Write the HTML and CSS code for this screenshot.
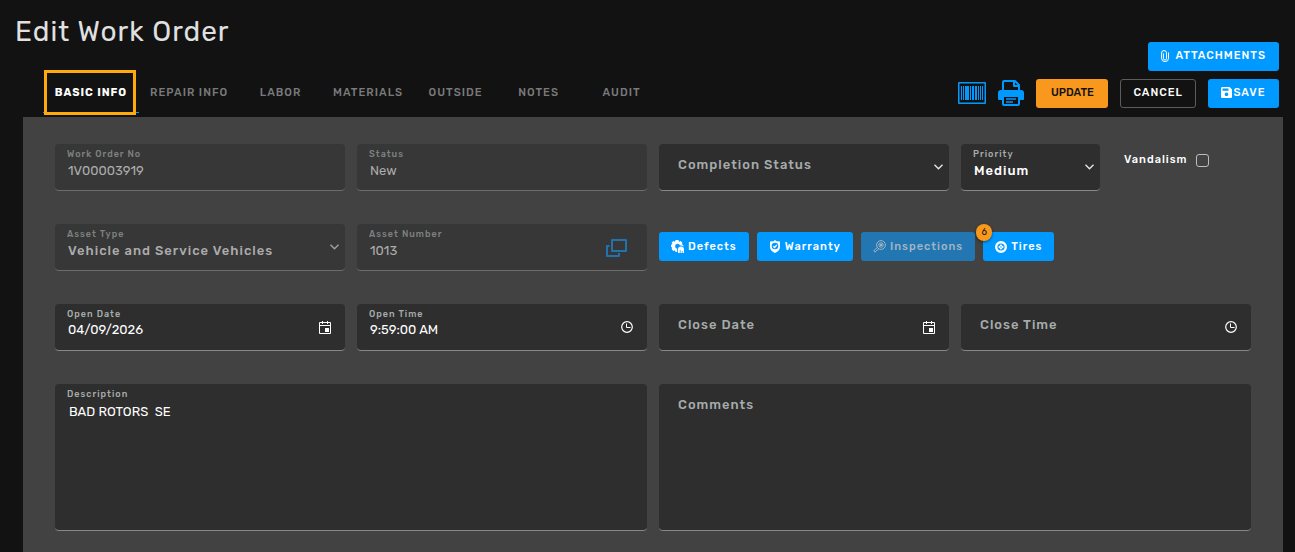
FILE: index.html
```
<!DOCTYPE html>
<html lang="en">
<head>
    <meta charset="UTF-8">
    <meta name="viewport" content="width=device-width, initial-scale=1.0">
    <title>Edit Work Order</title>
    <link rel="stylesheet" href="styles.css">
</head>
<body>
    <header class="page-header">
        <h1>Edit Work Order</h1>
        <button type="button" class="btn btn-primary btn-attach">
            <svg width="8" height="12" viewBox="0 0 8 12" fill="none" stroke="currentColor"><path d="M2.500 3.500v5a1.500 1.500 0 0 0 3 0V3a2.400 2.400 0 0 0-4.900 0v5.200a3.400 3.400 0 0 0 6.900 0V2.500"/></svg>
            ATTACHMENTS
        </button>
    </header>

    <div class="toolbar">
        <nav class="tabs">
            <a href="#basic" class="tab active">BASIC INFO</a>
            <a href="#repair" class="tab">REPAIR INFO</a>
            <a href="#labor" class="tab">LABOR</a>
            <a href="#materials" class="tab">MATERIALS</a>
            <a href="#outside" class="tab">OUTSIDE</a>
            <a href="#notes" class="tab">NOTES</a>
            <a href="#audit" class="tab">AUDIT</a>
        </nav>
        <div class="actions">
            <button type="button" class="icon-btn" aria-label="Barcode">
                <svg width="28" height="22" viewBox="0 0 28 22" fill="currentColor"><path fill-rule="evenodd" d="M1 0h26a1 1 0 0 1 1 1v20a1 1 0 0 1-1 1H1a1 1 0 0 1-1-1V1a1 1 0 0 1 1-1zM1.500 1.500v19h25v-19z"/><path d="M3 4h1v14H3zM5 4h1v14H5zM7 4h4v14H7zM12 4h1v14h-1zM14 4h2v14h-2zM17 4h2v14h-2zM20 4h1v14h-1zM22 4h1v14h-1zM24 4h1v14h-1z"/></svg>
            </button>
            <button type="button" class="icon-btn" aria-label="Print">
                <svg width="26" height="26" viewBox="0 0 26 26" fill="none" stroke="currentColor" stroke-width="2" stroke-linejoin="round"><path fill="currentColor" d="M1 19v-6a2 2 0 0 1 2-2h20a2 2 0 0 1 2 2v6z"/><path fill="#121212" d="M5 10V2a1 1 0 0 1 1-1h11l4 4v5M16 1v5h5"/><path fill="#121212" d="M5 16h16v8a1 1 0 0 1-1 1H6a1 1 0 0 1-1-1z"/><path stroke-width="1.500" d="M8 19h10M8 22h7"/></svg>
            </button>
            <button type="button" class="btn btn-warning">UPDATE</button>
            <button type="button" class="btn btn-outline">CANCEL</button>
            <button type="submit" form="work-order" class="btn btn-primary btn-save">
                <svg width="11" height="11" viewBox="0 0 11 11" fill="currentColor"><path fill-rule="evenodd" d="M1.200 0H8.600L11 2.400V9.800a1.200 1.200 0 0 1-1.200 1.200H1.200A1.200 1.200 0 0 1 0 9.800V1.200A1.200 1.200 0 0 1 1.200 0zM1.500 1.500v2.300H7.500V1.500zM5.500 5.500a1.800 1.800 0 1 0 .01 0z"/></svg>
                SAVE
            </button>
        </div>
    </div>

    <form class="panel" id="work-order">
        <div class="field disabled">
            <label for="order-no">Work Order No</label>
            <input type="text" id="order-no" value="1V00003919" disabled>
        </div>
        <div class="field disabled">
            <label for="status">Status</label>
            <input type="text" id="status" value="New" disabled>
        </div>
        <div class="field empty">
            <label for="completion">Completion Status</label>
            <select id="completion"><option></option></select>
            <svg class="chevron" width="9" height="6" viewBox="0 0 9 6"><path d="M.5.7l4 4 4-4"/></svg>
        </div>
        <div class="split">
            <div class="field">
                <label for="priority">Priority</label>
                <select id="priority"><option>Medium</option></select>
                <svg class="chevron" width="9" height="6" viewBox="0 0 9 6"><path d="M.5.7l4 4 4-4"/></svg>
            </div>
            <label class="check">Vandalism <input type="checkbox"></label>
        </div>

        <div class="field disabled">
            <label for="asset-type">Asset Type</label>
            <select id="asset-type" disabled><option>Vehicle and Service Vehicles</option></select>
            <svg class="chevron" width="9" height="6" viewBox="0 0 9 6"><path d="M.5.7l4 4 4-4"/></svg>
        </div>
        <div class="field disabled">
            <label for="asset-no">Asset Number</label>
            <input type="text" id="asset-no" value="1013" disabled>
            <button type="button" class="lookup" aria-label="Find asset" disabled>
                <svg width="21" height="18" viewBox="0 0 21 18" fill="none" stroke="currentColor" stroke-width="2" stroke-linejoin="round"><path d="M6 1h14v11H6zM3.500 7H1v10h12v-3"/></svg>
            </button>
        </div>
        <div class="links">
            <button type="button" class="btn btn-primary">
                <svg width="13" height="13" viewBox="0 0 13 13" fill="currentColor"><path fill-rule="evenodd" d="M4.500 0h3l.5 1.700 1.700-.8 1.800 2-.8 1.400 1.600.8v1.700a3 3 0 0 0-3.300-1.200 2.500 2.500 0 1 0-2.800 3.200V12H4.500L4 10.300l-1.700.8-1.700-2 .7-1.500L0 7V4.700l1.400-.6-.8-1.500L2.400.9 4 1.700z"/><path d="M7 13V9.500a3 3 0 0 1 6 0V13h-1.500v-2h-.7v2H9.500v-3h-.7v3z"/></svg>
                Defects
            </button>
            <button type="button" class="btn btn-primary">
                <svg width="12" height="13" viewBox="0 0 12 13"><path fill="currentColor" d="M6 0l1.500 1.200L11 1.500V7c0 3-2.500 5-5 6C3.500 12 1 10 1 7V1.500l3.500-.3z"/><circle cx="6" cy="6" r="3.300" fill="#0099ff"/><path d="M4.300 6.200l1.300 1.300 2.300-2.700" fill="none" stroke="currentColor" stroke-width="1.300"/></svg>
                Warranty
            </button>
            <button type="button" class="btn btn-primary" disabled>
                <svg width="13" height="13" viewBox="0 0 13 13" fill="none" stroke="currentColor"><circle cx="8" cy="5" r="4.400"/><circle cx="8" cy="5" r="2.200"/><path d="M4.500 7.200L.7 11l1.200 1.200 4-3.500M6.500 6.500l3-3M6.700 3.700l2.600 2.600"/></svg>
                Inspections
            </button>
            <button type="button" class="btn btn-primary btn-badge">
                <span class="badge">6</span>
                <svg width="12" height="12" viewBox="0 0 12 12" fill="none" stroke="currentColor"><circle cx="6" cy="6" r="4.800" stroke-width="2.400"/><circle cx="6" cy="6" r="1.600"/><path d="M6 3v6M3 6h6" stroke-width=".7"/></svg>
                Tires
            </button>
        </div>

        <div class="field picker">
            <label for="open-date">Open Date</label>
            <input type="text" id="open-date" value="04/09/2026">
            <button type="button" class="pick" aria-label="Choose open date">
                <svg width="12" height="13" viewBox="0 0 12 13" fill="none" stroke="currentColor"><path d="M.5 1.500h11v11H.5zM.5 4.500h11M3.500 0v3M8.500 0v3"/><path fill="currentColor" stroke="none" d="M6 7h4v4H6z"/></svg>
            </button>
        </div>
        <div class="field picker">
            <label for="open-time">Open Time</label>
            <input type="text" id="open-time" value="9:59:00 AM">
            <button type="button" class="pick" aria-label="Choose open time">
                <svg width="12" height="12" viewBox="0 0 12 12" fill="none" stroke="currentColor"><circle cx="6" cy="6" r="5.300" stroke-width="1.200"/><path d="M5.500 2.500v4h4"/></svg>
            </button>
        </div>
        <div class="field picker empty">
            <label for="close-date">Close Date</label>
            <input type="text" id="close-date">
            <button type="button" class="pick" aria-label="Choose close date">
                <svg width="12" height="13" viewBox="0 0 12 13" fill="none" stroke="currentColor"><path d="M.5 1.500h11v11H.5zM.5 4.500h11M3.500 0v3M8.500 0v3"/><path fill="currentColor" stroke="none" d="M6 7h4v4H6z"/></svg>
            </button>
        </div>
        <div class="field picker empty">
            <label for="close-time">Close Time</label>
            <input type="text" id="close-time">
            <button type="button" class="pick" aria-label="Choose close time">
                <svg width="12" height="12" viewBox="0 0 12 12" fill="none" stroke="currentColor"><circle cx="6" cy="6" r="5.300" stroke-width="1.200"/><path d="M5.500 2.500v4h4"/></svg>
            </button>
        </div>

        <div class="field wide">
            <label for="description">Description</label>
            <textarea id="description">BAD ROTORS  SE</textarea>
        </div>
        <div class="field wide empty">
            <label for="comments">Comments</label>
            <textarea id="comments"></textarea>
        </div>
    </form>
</body>
</html>
```

FILE: styles.css
```
:root {
    --bg: #121212;
    --panel: #424242;
    --field: #2e2e2e;
    --blue: #0099ff;
    --orange: #f8981d;
}
* {
    box-sizing: border-box;
}
body {
    margin: 0;
    background: var(--bg);
    color: #fff;
    font-family: Rubik, Roboto, sans-serif;
    font-size: 13px;
    display: flex;
    flex-direction: column;
    min-height: 100vh;
}
button, input, select, textarea {
    font-family: inherit;
    font-size: inherit;
    color: inherit;
}

/* Header */
.page-header {
    display: flex;
    justify-content: space-between;
    align-items: flex-end;
    padding: 14px 16px 0 15px;
}
.page-header h1 {
    margin: 0;
    align-self: flex-start;
    font-size: 28px;
    line-height: 36px;
    font-weight: 400;
    letter-spacing: 1px;
    color: #e0e0e0;
}
.toolbar {
    display: flex;
    justify-content: space-between;
    padding: 0 16px 4px 43px;
}
.tabs {
    display: flex;
}
.tab {
    position: relative;
    min-width: 83px;
    height: 42px;
    padding: 0 11px;
    line-height: 44px;
    text-align: center;
    text-decoration: none;
    font-size: 11px;
    font-weight: 500;
    letter-spacing: 1px;
    color: #7a7a7a;
}
.tab.active {
    min-width: 96px;
    color: #fff;
    font-weight: 700;
    border-bottom: 1px solid var(--blue);
}
.tab.active::after {
    content: "";
    position: absolute;
    inset: -1px 3px -3px 1px;
    border: 3px solid #ffa90a;
}
.actions {
    display: flex;
    align-items: center;
    gap: 12px;
    padding-top: 2px;
}
.icon-btn, .pick, .lookup {
    display: flex;
    padding: 0;
    border: 0;
    background: none;
}
.icon-btn {
    color: var(--blue);
}

/* Buttons */
.btn {
    display: flex;
    align-items: center;
    justify-content: center;
    gap: 4px;
    height: 29px;
    padding: 0 12px 2px;
    border: 1px solid transparent;
    border-radius: 3px;
    font-size: 11px;
    font-weight: 500;
    letter-spacing: 1px;
    white-space: nowrap;
}
.btn-primary {
    background: var(--blue);
    color: #fff;
}
.btn-primary:disabled {
    background: #2277b3;
    color: #a0b4c2;
}
.btn-warning {
    min-width: 72px;
    background: var(--orange);
    color: #121212;
    letter-spacing: 0;
}
.btn-outline {
    background: transparent;
    border-color: #5c5c5c;
}
.btn-attach {
    gap: 6px;
    margin-top: 28px;
}
.btn-save {
    gap: 1px;
    min-width: 71px;
}
.btn-badge {
    position: relative;
}
.badge {
    position: absolute;
    top: -9px;
    left: -8px;
    width: 16px;
    height: 17px;
    border-radius: 8px;
    background: var(--orange);
    color: #121212;
    font-size: 9px;
    font-weight: 400;
    line-height: 17px;
    letter-spacing: 0;
    box-shadow: 0 1px 3px rgba(0, 0, 0, 0.5);
}

/* Form */
.panel {
    flex: 1;
    display: grid;
    grid-template-columns: repeat(4, 1fr);
    align-content: start;
    gap: 33px 12px;
    margin: 0 12px 0 23px;
    padding: 27px 32px 20px;
    background: var(--panel);
}
.field {
    display: grid;
    height: 47px;
    background: var(--field);
    border-bottom: 1px solid #82888e;
    border-radius: 4px;
}
.field > * {
    grid-area: 1 / 1;
}
.field label {
    align-self: start;
    justify-self: start;
    z-index: 1;
    padding: 4px 12px 0;
    font-size: 9px;
    line-height: 12px;
    font-weight: 500;
    letter-spacing: 1px;
    color: #a6acac;
    pointer-events: none;
}
.field.empty label {
    padding: 12px 19px 0;
    font-size: 13px;
    line-height: 18px;
}
.field input, .field select, .field textarea {
    width: 100%;
    height: 100%;
    padding: 7px 40px 0 13px;
    border: 0;
    outline: 0;
    background: none;
    appearance: none;
    resize: none;
}
.field select {
    padding-right: 20px;
    font-weight: 500;
    letter-spacing: 1px;
}
.field.picker input {
    padding-top: 5px;
}
.field textarea {
    padding: 19px 14px 8px;
    line-height: 18px;
}
.field.wide {
    grid-column: span 2;
    height: 147px;
}
.field.disabled {
    background: #373737;
    border-color: #6d6d6d;
}
.field.disabled label {
    color: #7e8282;
}
.field.disabled input, .field.disabled select {
    color: #acacac;
    opacity: 1;
}
.chevron {
    align-self: center;
    justify-self: end;
    margin-right: 6px;
    fill: none;
    stroke: #e4e4e4;
    stroke-width: 1.4;
    pointer-events: none;
}
.disabled .chevron {
    stroke: #a0a0a0;
}
.pick {
    align-self: center;
    justify-self: end;
    margin-right: 14px;
    color: #fff;
}
.lookup {
    align-self: center;
    justify-self: end;
    margin-right: 20px;
    padding-top: 2px;
    color: #2272ab;
}
.split {
    display: grid;
    grid-template-columns: 139px 1fr;
    gap: 24px;
}
.check {
    display: flex;
    align-items: flex-start;
    gap: 8px;
    padding-top: 7px;
    font-size: 11px;
    line-height: 18px;
    font-weight: 500;
    letter-spacing: 1px;
}
.check input {
    width: 13px;
    height: 13px;
    margin: 3px 0 0;
    appearance: none;
    border: 1px solid #bdbdbd;
    border-radius: 3px;
}
.check input:checked {
    background: var(--blue);
}
.links {
    grid-column: span 2;
    display: flex;
    align-items: flex-start;
    gap: 8px;
    padding-top: 8px;
}
.links .btn {
    padding: 0 11px;
}
```
